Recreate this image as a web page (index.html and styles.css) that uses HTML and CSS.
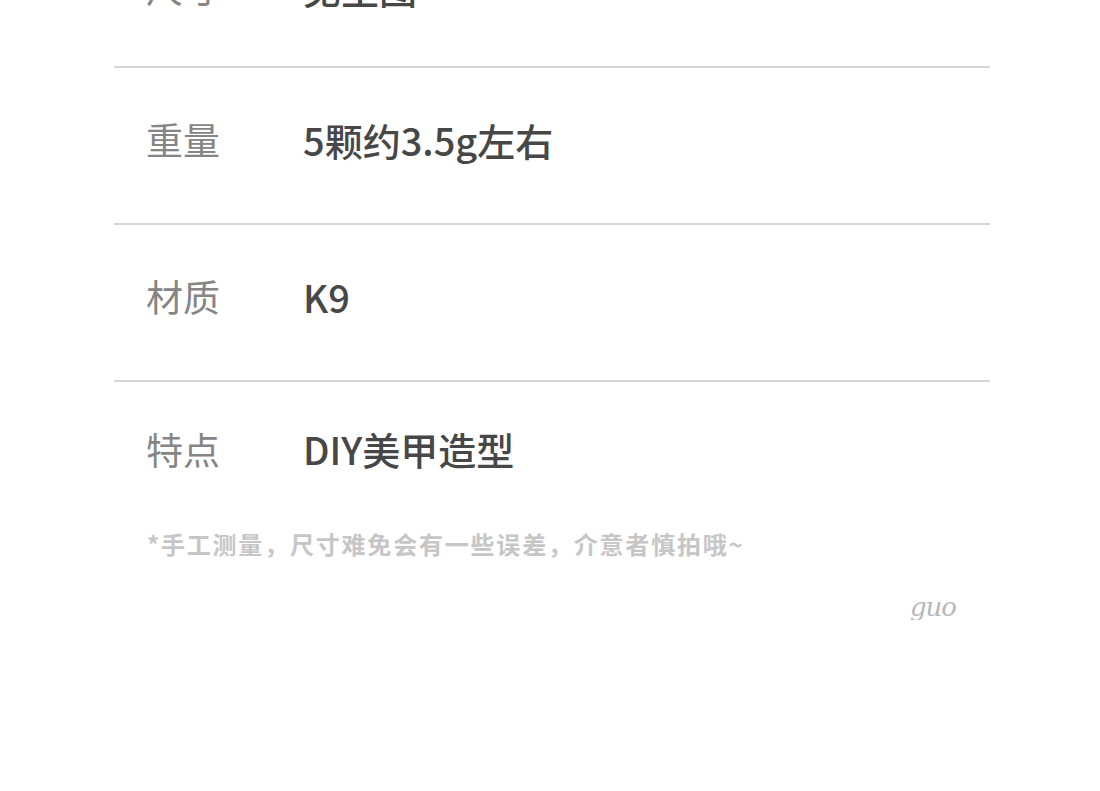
FILE: index.html
```html
<!DOCTYPE html>
<html lang="zh-CN">
<head>
<meta charset="utf-8">
<link rel="stylesheet" href="styles.css">
</head>
<body>
<div class="page">
  <div class="table">
    <div class="row first">
      <div class="label">尺寸</div>
      <div class="value">见主图</div>
    </div>
    <div class="row">
      <div class="label">重量</div>
      <div class="value">5颗约3.5g左右</div>
    </div>
    <div class="row">
      <div class="label">材质</div>
      <div class="value">K9</div>
    </div>
    <div class="row last">
      <div class="label">特点</div>
      <div class="value">DIY美甲造型</div>
    </div>
  </div>
  <div class="note">*手工测量，尺寸难免会有一些误差，介意者慎拍哦~</div>
  <div class="sign-row"><span class="sign">guo</span></div>
</div>
</body>
</html>
```

FILE: styles.css
```css
html, body {
  margin: 0;
  padding: 0;
  background: #ffffff;
}
body {
  font-family: "Noto Sans CJK SC", "Noto Sans", sans-serif;
  overflow: hidden;
}
.page {
  width: 876px;
  margin: -89px 0 0 114px;
}
.table {
  display: flex;
  flex-direction: column;
}
.row {
  box-sizing: border-box;
  height: 157px;
  border-bottom: 2px solid #d6d6d6;
  display: flex;
  align-items: center;
  padding: 0 0 12px 32px;
}
.row.first {
  padding-bottom: 2px;
}
.row.last {
  border-bottom: none;
  height: 146px;
}
.label {
  width: 157px;
  font-size: 37px;
  line-height: 1;
  color: #858585;
}
.value {
  font-size: 38px;
  line-height: 1;
  color: #474747;
  font-weight: 500;
}
.note {
  padding-left: 33px;
  font-size: 24px;
  line-height: 1;
  color: #c6c6c6;
  font-weight: 700;
  letter-spacing: 1.8px;
  margin-top: 4px;
}
.sign-row {
  display: flex;
  justify-content: flex-end;
  padding-right: 34px;
  margin-top: 38px;
}
.sign {
  font-family: "DejaVu Serif", serif;
  font-style: italic;
  font-size: 26px;
  line-height: 1;
  color: #b8b8b8;
  font-weight: 300;
  letter-spacing: -1px;
}
```
